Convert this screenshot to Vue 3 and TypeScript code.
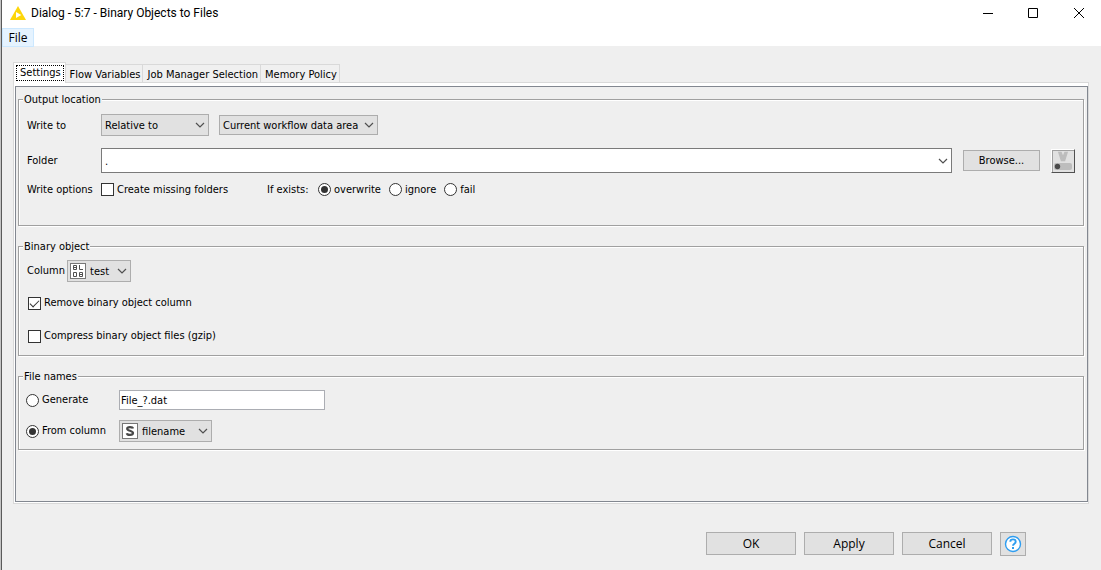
<script setup lang="ts">
import { ref } from 'vue'

const tabs = ['Settings', 'Flow Variables', 'Job Manager Selection', 'Memory Policy']
const activeTab = ref('Settings')

const base = ref('Relative to')
const area = ref('Current workflow data area')
const folder = ref('.')
const createMissing = ref(false)
const existsPolicies = ['overwrite', 'ignore', 'fail']
const ifExists = ref('overwrite')

const binaryColumn = ref('test')
const removeColumn = ref(true)
const compress = ref(false)

const nameSource = ref('column')
const pattern = ref('File_?.dat')
const nameColumn = ref('filename')
</script>

<template>
  <div class="window">
    <div class="frame">
      <header class="titlebar">
        <svg class="logo" viewBox="0 0 16 14" aria-hidden="true">
          <path d="M8 0 L16 14 H0 Z" fill="#fdd60a" />
          <path d="M6 6 L11.3 9 L6 12 Z" fill="#fff" />
        </svg>
        <h1>Dialog - 5:7 - Binary Objects to Files</h1>
        <div class="controls">
          <button type="button" aria-label="Minimize">
            <svg viewBox="0 0 12 12"><path d="M2 6.5H12" /></svg>
          </button>
          <button type="button" aria-label="Maximize">
            <svg viewBox="0 0 12 12"><path d="M1.5 1.5H10.5V10.5H1.5Z" /></svg>
          </button>
          <button type="button" aria-label="Close">
            <svg viewBox="0 0 12 12"><path d="M1 1L11 11M11 1L1 11" /></svg>
          </button>
        </div>
      </header>
      <nav class="menubar"><button type="button">File</button></nav>

      <main>
        <div class="tabs" role="tablist">
          <button
            v-for="t in tabs"
            :key="t"
            type="button"
            role="tab"
            class="tab"
            :class="{ active: t === activeTab }"
            :aria-selected="t === activeTab"
            @click="activeTab = t"
          ><span>{{ t }}</span></button>
        </div>
        <div class="outer">
          <div class="pane" role="tabpanel">
            <fieldset class="output">
              <legend>Output location</legend>
              <div class="row write-row">
                <label class="name" for="base">Write to</label>
                <span class="combo base">
                  <select id="base" v-model="base"><option>Relative to</option></select>
                  <svg class="chev" viewBox="0 0 10 6"><path d="M1 1L5 5L9 1" /></svg>
                </span>
                <span class="combo area">
                  <select v-model="area" aria-label="Location"><option>Current workflow data area</option></select>
                  <svg class="chev" viewBox="0 0 10 6"><path d="M1 1L5 5L9 1" /></svg>
                </span>
              </div>
              <div class="row folder-row">
                <label class="name" for="folder">Folder</label>
                <span class="combo folder">
                  <input id="folder" v-model="folder" type="text" />
                  <svg class="chev" viewBox="0 0 10 6"><path d="M1 1L5 5L9 1" /></svg>
                </span>
                <button type="button" class="browse">Browse...</button>
                <button type="button" class="variable" aria-label="Flow variable">
                  <svg viewBox="0 0 20 20" aria-hidden="true">
                    <path d="M6 1.500H8L10 6.500L12 1.500H14L11.500 9.500H8.500Z" fill="#bdbdbd" stroke="#bdbdbd" stroke-width="1.600" />
                    <rect x="1" y="12" width="18" height="7" rx="2" fill="#bdbdbd" />
                    <circle cx="4.500" cy="15.500" r="2.700" fill="#4a4a4a" />
                  </svg>
                </button>
              </div>
              <div class="row options-row">
                <span class="name">Write options</span>
                <label class="choice create"><input v-model="createMissing" type="checkbox" />Create missing folders</label>
                <span class="exists">If exists:</span>
                <label v-for="p in existsPolicies" :key="p" class="choice policy">
                  <input v-model="ifExists" type="radio" name="exists" :value="p" />{{ p }}
                </label>
              </div>
            </fieldset>

            <fieldset class="binary">
              <legend>Binary object</legend>
              <div class="row">
                <label class="short" for="bincol">Column</label>
                <span class="combo typed bincol">
                  <svg class="type" viewBox="0 0 16 16" aria-hidden="true">
                    <rect x=".5" y=".5" width="15" height="15" fill="#fff" stroke="#777" />
                    <path d="M3.500 2.500H6.500V6.500H3.500ZM3.500 4.500H6.500M9.500 2V6.500H13M3.500 9.500H6.500V13.500H3.500ZM9.500 9.500H12.500V13.500H9.500ZM9.500 11.500H12.500" fill="none" stroke="#505050" />
                  </svg>
                  <select id="bincol" v-model="binaryColumn"><option>test</option></select>
                  <svg class="chev" viewBox="0 0 10 6"><path d="M1 1L5 5L9 1" /></svg>
                </span>
              </div>
              <label class="choice remove"><input v-model="removeColumn" type="checkbox" />Remove binary object column</label>
              <label class="choice compress"><input v-model="compress" type="checkbox" />Compress binary object files (gzip)</label>
            </fieldset>

            <fieldset class="names">
              <legend>File names</legend>
              <div class="row">
                <label class="choice source"><input v-model="nameSource" type="radio" name="source" value="generate" />Generate</label>
                <input v-model="pattern" class="pattern" type="text" aria-label="File name pattern" />
              </div>
              <div class="row">
                <label class="choice source"><input v-model="nameSource" type="radio" name="source" value="column" />From column</label>
                <span class="combo typed namecol">
                  <svg class="type" viewBox="0 0 16 16" aria-hidden="true">
                    <rect x=".5" y=".5" width="15" height="15" fill="#fff" stroke="#777" />
                    <path d="M11 5.500C10.500 3.600 5.200 3.500 5.200 5.800C5.200 8.200 11 7.400 11 10.100C11 12.600 5.200 12.500 4.800 10.300" fill="none" stroke="#484848" stroke-width="2.200" />
                  </svg>
                  <select v-model="nameColumn" aria-label="File name column"><option>filename</option></select>
                  <svg class="chev" viewBox="0 0 10 6"><path d="M1 1L5 5L9 1" /></svg>
                </span>
              </div>
            </fieldset>
          </div>
        </div>
      </main>

      <footer>
        <button type="button" class="action">OK</button>
        <button type="button" class="action">Apply</button>
        <button type="button" class="action">Cancel</button>
        <button type="button" class="help" aria-label="Help">
          <svg viewBox="0 0 18 18" aria-hidden="true">
            <circle cx="9" cy="9" r="7.500" fill="#fff" stroke="#2e9df0" stroke-width="1.400" />
            <path d="M6.300 6.800C6.300 3.600 11.700 3.600 11.700 6.800C11.700 8.800 9 8.600 9 10.800" fill="none" stroke="#2e9df0" stroke-width="1.900" />
            <rect x="8" y="12" width="2" height="2" fill="#2e9df0" />
          </svg>
        </button>
      </footer>
    </div>
  </div>
</template>

<style>
body {
  margin: 0;
  background: #efefef;
}
</style>

<style scoped>
* {
  box-sizing: border-box;
}
.window {
  min-height: 100vh;
  display: flex;
  border-left: 1px solid #c4c4c4;
  color: #000;
  font: 11px/16px "DejaVu Sans Condensed", "DejaVu Sans", sans-serif;
}
.frame {
  flex: 1;
  min-width: 0;
  display: flex;
  flex-direction: column;
  border-left: 1px solid #5a5a5a;
  background: #efefef;
}
button,
select,
input {
  margin: 0;
  font: inherit;
  color: inherit;
  border-radius: 0;
}
button {
  padding: 0;
}
.titlebar {
  display: flex;
  align-items: center;
  height: 28px;
  padding: 0 16px 3px 8px;
  background: #fff;
}
.logo {
  width: 16px;
  height: 14px;
}
h1 {
  margin: 0 auto 0 5px;
  font: 12px/16px Roboto, "Liberation Sans", sans-serif;
}
.controls {
  display: flex;
  gap: 34px;
}
.controls button {
  width: 12px;
  height: 12px;
  border: 0;
  background: none;
}
.controls svg {
  display: block;
  width: 12px;
  height: 12px;
  fill: none;
  stroke: #000;
}
.menubar {
  height: 18px;
  background: #fff;
}
.menubar button {
  display: block;
  width: 32px;
  height: 19px;
  border: 1px solid #cce8ff;
  background: #e5f3ff;
  font: 12px/17px "Open Sans", "Noto Sans", sans-serif;
}
main {
  flex: 1;
  display: flex;
  flex-direction: column;
  padding: 16px 12px 0 11px;
}
.tabs {
  display: flex;
  align-items: flex-end;
  height: 20px;
}
.tab {
  height: 18px;
  padding: 1px 2px 0 4px;
  border: 1px solid #d9d9d9;
  border-width: 1px 1px 0 0;
  background: #f0f0f0;
  line-height: 17px;
  white-space: nowrap;
}
.tab.active {
  height: 21px;
  margin-bottom: -1px;
  padding: 2px 1px 2px 2px;
  border-left-width: 1px;
  background: #fff;
  z-index: 1;
}
.tab.active span {
  display: block;
  padding: 0 2px 0 3px;
  border: 1px dotted #000;
  line-height: 14px;
}
.outer {
  flex: 1;
  display: flex;
  padding: 3px 0 1px 1px;
  border: 1px solid #d9d9d9;
  background: #fff;
}
.pane {
  flex: 1;
  min-width: 0;
  padding: 6px 3px 0 2px;
  border: 1px solid #828790;
  background: #efefef;
}
fieldset {
  min-width: 0;
  margin: 0 0 14px;
  border: 1px solid #a0a0a0;
  box-shadow: 1px 1px #fff, inset 1px 1px #fff;
}
legend {
  padding: 0 1px;
  background: #efefef;
  line-height: 13px;
}
.output {
  padding: 8px 7px 27px 4px;
}
.binary {
  padding: 7px 7px 11px 4px;
}
.names {
  padding: 7px 7px 7px 4px;
}
.row {
  display: flex;
  align-items: center;
}
.name {
  width: 78px;
  padding: 1px 0 0 4px;
  white-space: nowrap;
}
.short {
  width: 44px;
  padding-left: 4px;
}
.combo {
  position: relative;
  display: flex;
}
.combo select {
  width: 100%;
  height: 22px;
  padding: 1px 18px 0 3px;
  border: 1px solid #adadad;
  background: #e1e1e1;
  appearance: none;
}
.chev {
  position: absolute;
  right: 4px;
  top: calc(50% - 3px);
  width: 10px;
  height: 6px;
  fill: none;
  stroke: #505050;
  stroke-width: 1.2;
  pointer-events: none;
}
.combo.base {
  width: 108px;
}
.combo.area {
  width: 159px;
  margin-left: 10px;
}
.combo.area select {
  height: 20px;
}
.type {
  position: absolute;
  left: 3px;
  top: 3px;
  width: 16px;
  height: 16px;
  pointer-events: none;
}
.combo.typed select {
  padding-left: 22px;
}
.combo.bincol {
  width: 64px;
}
.combo.namecol {
  width: 93px;
}
.folder-row {
  margin-top: 12px;
  padding-right: 1px;
}
.combo.folder {
  flex: 1;
  min-width: 0;
}
.combo.folder input {
  width: 100%;
  height: 25px;
  padding: 1px 20px 0 3px;
  border: 1px solid #7a7a7a;
  background: #fff;
}
.browse,
.action,
.help {
  border: 1px solid #adadad;
  background: #e1e1e1;
}
.browse {
  width: 77px;
  height: 21px;
  margin: 0 11px;
}
.variable {
  width: 24px;
  height: 24px;
  border: 1px solid;
  border-color: #fff #505050 #505050 #fff;
  box-shadow: inset 1px 1px #a0a0a0;
  background: #e1e1e1;
}
.variable svg {
  display: block;
  width: 20px;
  height: 20px;
  margin: auto;
}
.options-row {
  margin-top: 8px;
}
.choice {
  display: flex;
  align-items: center;
  gap: 3px;
  line-height: 16px;
  white-space: nowrap;
}
.choice input {
  position: relative;
  flex: none;
  width: 13px;
  height: 13px;
  border: 1px solid #333;
  background: #fff;
  appearance: none;
}
.choice input[type="radio"] {
  border-radius: 50%;
}
.choice input[type="radio"]:checked::after {
  content: "";
  position: absolute;
  inset: 2px;
  border-radius: 50%;
  background: #333;
}
.choice input[type="checkbox"]:checked::after {
  content: "";
  position: absolute;
  left: 3px;
  top: 0;
  width: 4px;
  height: 8px;
  border: solid #333;
  border-width: 0 1px 1px 0;
  transform: rotate(45deg);
}
.create {
  width: 166px;
}
.exists {
  width: 43px;
  white-space: nowrap;
}
.policy {
  margin-left: 8px;
}
.remove,
.compress {
  margin-left: 5px;
}
.remove {
  margin-top: 13px;
}
.compress {
  margin-top: 17px;
}
.source {
  width: 96px;
  padding-left: 3px;
}
.names .row + .row {
  margin-top: 10px;
}
.pattern {
  width: 206px;
  height: 20px;
  padding: 0 1px;
  border: 1px solid #abadb3;
  background: #fff;
}
footer {
  display: flex;
  justify-content: flex-end;
  gap: 8px;
  padding: 28px 75px 14px 12px;
}
.action {
  width: 90px;
  height: 23px;
  font: 12px/21px "Open Sans", "Noto Sans", sans-serif;
}
.help {
  width: 26px;
  height: 24px;
}
.help svg {
  display: block;
  width: 18px;
  height: 18px;
  margin: auto;
}
</style>
